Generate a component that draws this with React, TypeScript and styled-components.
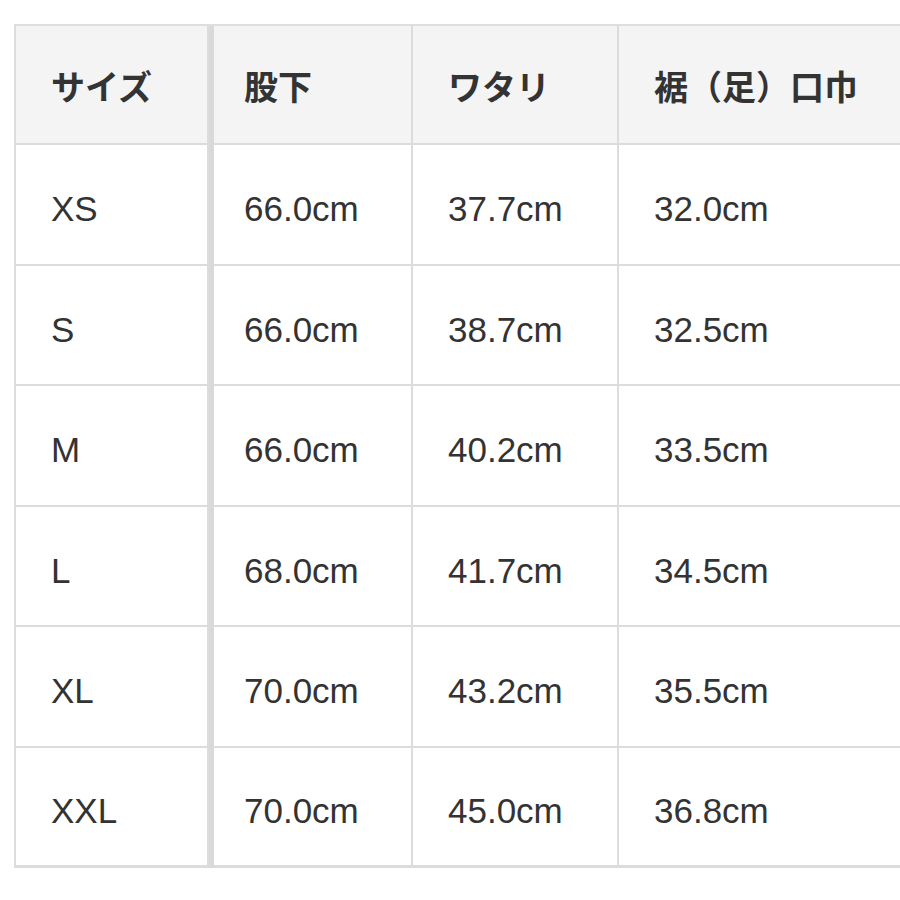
import React from 'react';
import styled, {createGlobalStyle} from 'styled-components';

const GlobalStyle = createGlobalStyle`
  html, body {
    margin: 0;
    padding: 0;
    background-color: #ffffff;
  }
  body {
    width: 900px;
    height: 900px;
    overflow: hidden;
  }
`

const Page = styled.div`
  padding: 24px 0 0 14px;
  font-family: "Liberation Sans", Arial, sans-serif;
  color: #333333;
`

const Table = styled.div`
  display: grid;
  grid-template-columns: 193px 204px 206px 320px;
  grid-template-rows: 119px repeat(6, 120.5px);
  width: 923px;
  border-top: 2px solid #dedede;
  border-left: 2px solid #dcdcdc;
`

const Cell = styled.div<{ $head?: boolean; $first?: boolean; $last?: boolean }>`
  box-sizing: border-box;
  display: flex;
  align-items: center;
  padding: ${p => (p.$head ? '2px 0 0 35px' : '10px 0 0 35px')};
  border-right: 2px solid #dcdcdc;
  border-bottom: ${p => (p.$last ? '3px' : '2px')} solid #dcdcdc;
  background-color: ${p => (p.$head ? '#f4f4f4' : '#ffffff')};
  font-size: ${p => (p.$head ? '34px' : '35px')};
  font-weight: ${p => (p.$head ? 700 : 400)};
  font-family: ${p => (p.$head
    ? '"Noto Sans CJK JP", "Noto Sans", sans-serif'
    : '"Liberation Sans", Arial, sans-serif')};
  white-space: nowrap;
  ${p => p.$first && `
    position: relative;
    z-index: 1;
    box-shadow: 5px 0 0 #d9d9d9;
  `}
`

const headers = ['サイズ', '股下', 'ワタリ', '裾（足）口巾']

const rows = [
    ['XS', '66.0cm', '37.7cm', '32.0cm'],
    ['S', '66.0cm', '38.7cm', '32.5cm'],
    ['M', '66.0cm', '40.2cm', '33.5cm'],
    ['L', '68.0cm', '41.7cm', '34.5cm'],
    ['XL', '70.0cm', '43.2cm', '35.5cm'],
    ['XXL', '70.0cm', '45.0cm', '36.8cm'],
]

const App: React.FC = () => {
    return (
        <>
            <GlobalStyle/>
            <Page>
                <Table>
                    {headers.map((h, i) => (
                        <Cell key={h} $head $first={i === 0}>{h}</Cell>
                    ))}
                    {rows.map((row, r) =>
                        row.map((value, i) => (
                            <Cell
                                key={`${r}-${i}`}
                                $first={i === 0}
                                $last={r === rows.length - 1}
                            >{value}</Cell>
                        ))
                    )}
                </Table>
            </Page>
        </>
    );
}

export default App
